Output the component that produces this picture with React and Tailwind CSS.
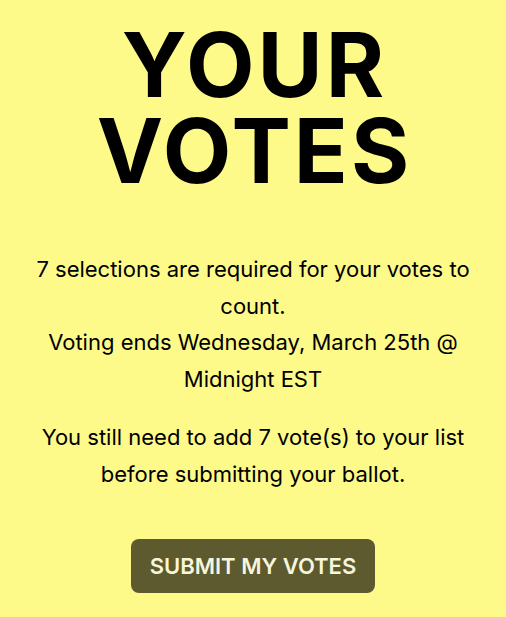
export default function App() {
  return (
    <div
      className="min-h-screen w-full bg-[#fdfa8a] text-black flex flex-col items-center text-center pt-[22px] pb-6"
      style={{ fontFamily: 'Inter, "Noto Sans", sans-serif' }}
    >
      <h1 className="text-[89px] leading-[86px] font-bold tracking-[3px] pl-[3px]">
        YOUR
        <br />
        VOTES
      </h1>
      <div className="mt-[57px] text-[22px] leading-[36.7px]">
        <p>
          <span className="block">7 selections are required for your votes to</span>
          <span className="block">count.</span>
          <span className="block">Voting ends Wednesday, March 25th @</span>
          <span className="block">Midnight EST</span>
        </p>
        <p className="mt-[21px]">
          <span className="block">You still need to add 7 vote(s) to your list</span>
          <span className="block">before submitting your ballot.</span>
        </p>
      </div>
      <button className="mt-[47px] w-[244px] h-[54px] rounded-lg bg-[#5c5a2e] text-[#f7f5dc] text-[22px] font-semibold">
        SUBMIT MY VOTES
      </button>
    </div>
  );
}
